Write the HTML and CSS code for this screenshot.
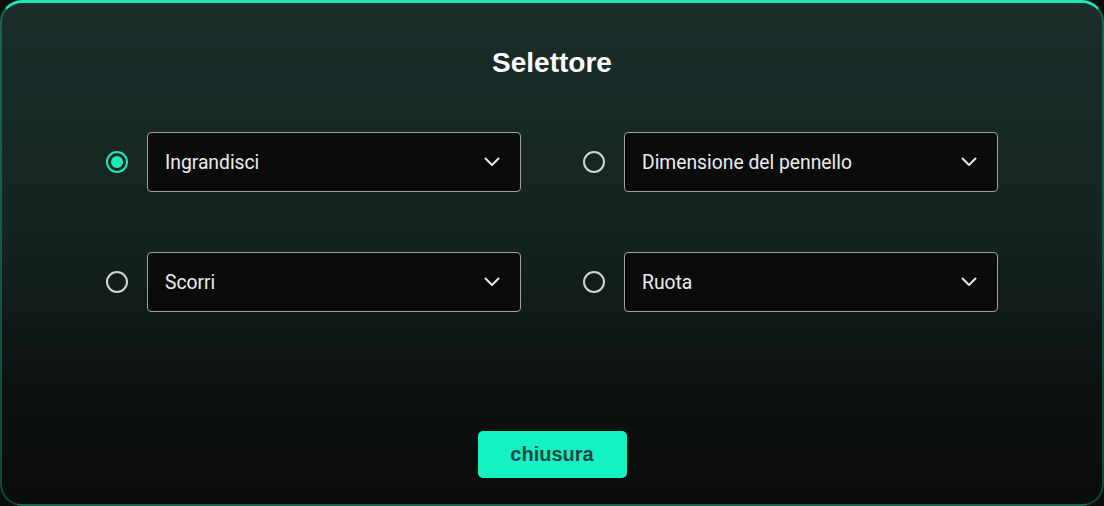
FILE: index.html
```html
<!DOCTYPE html>
<html lang="it">
<head>
<meta charset="utf-8">
<title>Selettore</title>
<link rel="stylesheet" href="styles.css">
</head>
<body>
<div class="panel">
  <h1 class="title">Selettore</h1>
  <div class="grid">
    <div class="item">
      <span class="radio checked"></span>
      <div class="select"><span>Ingrandisci</span>
        <svg class="chev" viewBox="0 0 16 10" width="16" height="10"><path d="M1.5 1.5 L8 8 L14.5 1.5" fill="none" stroke="#e6e6e6" stroke-width="2" stroke-linecap="round" stroke-linejoin="round"/></svg>
      </div>
    </div>
    <div class="item">
      <span class="radio"></span>
      <div class="select"><span>Dimensione del pennello</span>
        <svg class="chev" viewBox="0 0 16 10" width="16" height="10"><path d="M1.5 1.5 L8 8 L14.5 1.5" fill="none" stroke="#e6e6e6" stroke-width="2" stroke-linecap="round" stroke-linejoin="round"/></svg>
      </div>
    </div>
    <div class="item">
      <span class="radio"></span>
      <div class="select"><span>Scorri</span>
        <svg class="chev" viewBox="0 0 16 10" width="16" height="10"><path d="M1.5 1.5 L8 8 L14.5 1.5" fill="none" stroke="#e6e6e6" stroke-width="2" stroke-linecap="round" stroke-linejoin="round"/></svg>
      </div>
    </div>
    <div class="item">
      <span class="radio"></span>
      <div class="select"><span>Ruota</span>
        <svg class="chev" viewBox="0 0 16 10" width="16" height="10"><path d="M1.5 1.5 L8 8 L14.5 1.5" fill="none" stroke="#e6e6e6" stroke-width="2" stroke-linecap="round" stroke-linejoin="round"/></svg>
      </div>
    </div>
  </div>
  <div class="footer">
    <button class="btn">chiusura</button>
  </div>
</div>
</body>
</html>
```
FILE: styles.css
```css
html, body {
  margin: 0;
  padding: 0;
  background: #0b0d0d;
}
body {
  width: 1104px;
  height: 506px;
  overflow: hidden;
}
.panel {
  box-sizing: border-box;
  width: 1104px;
  height: 506px;
  border-radius: 22px;
  border: 2px solid rgba(29, 233, 182, 0.28);
  border-top: 3px solid #1de9b6;
  background: linear-gradient(180deg, #1a2d29 0%, #142421 45%, #0d1010 80%, #0b0c0c 100%);
  display: flex;
  flex-direction: column;
  align-items: center;
}
.title {
  margin: 44px 0 0;
  font-family: "Liberation Sans", Arial, sans-serif;
  font-weight: bold;
  font-size: 28px;
  line-height: 32px;
  color: #ffffff;
}
.grid {
  margin-top: 53px;
  display: grid;
  grid-template-columns: 415px 415px;
  column-gap: 62px;
  row-gap: 60px;
}
.item {
  display: flex;
  align-items: center;
  gap: 19px;
}
.radio {
  box-sizing: border-box;
  width: 22px;
  height: 22px;
  border-radius: 50%;
  border: 2px solid #d4d4d4;
  flex: none;
  position: relative;
}
.radio.checked {
  border-color: #1de9b6;
}
.radio.checked::after {
  content: "";
  position: absolute;
  left: 3px;
  top: 3px;
  width: 12px;
  height: 12px;
  border-radius: 50%;
  background: #1de9b6;
}
.select {
  box-sizing: border-box;
  width: 374px;
  height: 60px;
  background: #0b0b0c;
  border: 1px solid #9aa3a2;
  border-radius: 4px;
  display: flex;
  align-items: center;
  justify-content: space-between;
  padding: 0 20px 0 17px;
  font-family: Roboto, "Liberation Sans", sans-serif;
  font-size: 19.3px;
  color: #ececec;
}
.chev {
  display: block;
}
.footer {
  margin-top: auto;
  margin-bottom: 26px;
}
.btn {
  width: 149px;
  height: 47px;
  border: none;
  border-radius: 5px;
  background: #14f2c3;
  color: #1c4742;
  font-family: "Liberation Sans", Arial, sans-serif;
  font-weight: bold;
  font-size: 20px;
  cursor: pointer;
}
```
